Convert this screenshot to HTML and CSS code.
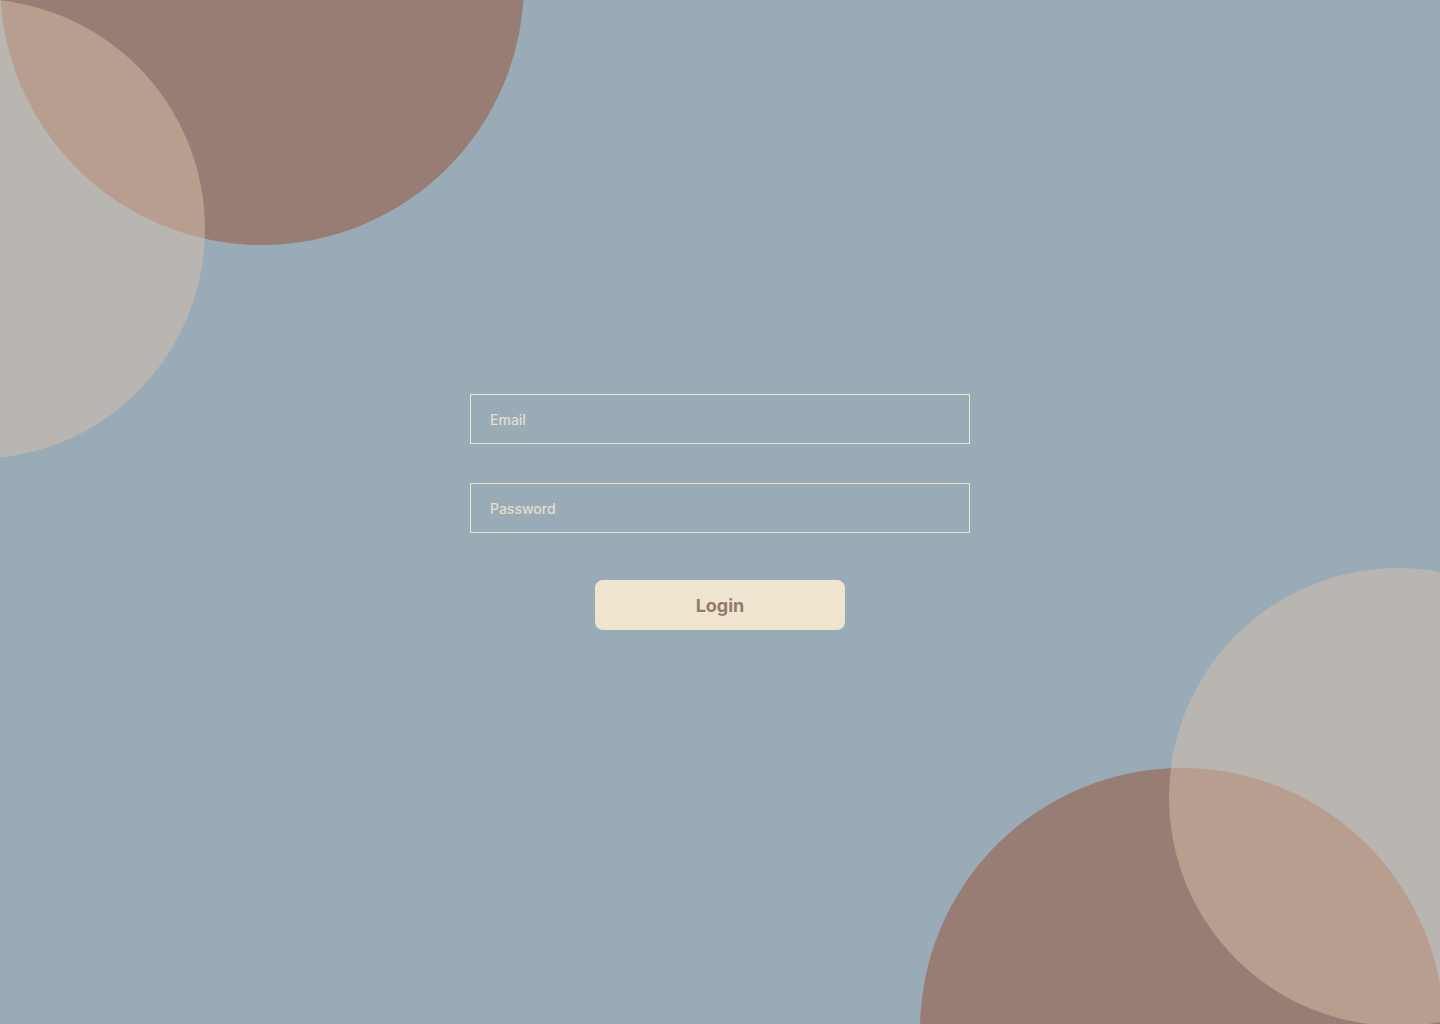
FILE: index.html
```html
<!DOCTYPE html>
<html lang="en">
<head>
<meta charset="utf-8">
<title>Login</title>
<link rel="stylesheet" href="styles.css">
</head>
<body>
<div class="page">
  <div class="blob blob-brown blob-tl"></div>
  <div class="blob blob-light blob-tl2"></div>
  <div class="blob blob-brown blob-br"></div>
  <div class="blob blob-light blob-br2"></div>
  <form class="login">
    <input class="field" type="email" placeholder="Email">
    <input class="field" type="password" placeholder="Password">
    <button class="btn" type="button">Login</button>
  </form>
</div>
</body>
</html>
```
FILE: styles.css
```css
* { box-sizing: border-box; }
html, body { margin: 0; padding: 0; }
body {
  background: #9aabb8;
  font-family: Inter, "Noto Sans", sans-serif;
}
.page {
  position: relative;
  width: 100%;
  height: 1024px;
  overflow: hidden;
  display: flex;
  align-items: center;
  justify-content: center;
}
.blob {
  position: absolute;
  border-radius: 50%;
}
.blob-brown { background: #987d74; }
.blob-light { background: #d8bfaa; opacity: 0.5; }
.blob-tl { width: 524px; height: 524px; left: 0; top: -279px; }
.blob-tl2 { width: 460px; height: 460px; left: -255px; top: -1px; }
.blob-br { width: 524px; height: 524px; left: 920px; top: 768px; }
.blob-br2 { width: 458px; height: 458px; left: 1169px; top: 568px; }
.login {
  position: relative;
  z-index: 1;
  width: 500px;
  display: flex;
  flex-direction: column;
  align-items: center;
}
.field {
  width: 500px;
  height: 50px;
  border: 1px solid #efe4cd;
  background: transparent;
  padding: 0 19px;
  font-family: Inter, "Noto Sans", sans-serif;
  font-size: 14px;
  font-weight: 500;
  color: #efe4cd;
  outline: none;
  border-radius: 0;
}
.field::placeholder { color: #e6ddcb; opacity: 1; }
.field + .field { margin-top: 39px; }
.btn {
  margin-top: 47px;
  width: 250px;
  height: 50px;
  border: none;
  border-radius: 8px;
  background: #efe4cd;
  color: #907a70;
  font-family: Inter, "Noto Sans", sans-serif;
  font-size: 18px;
  font-weight: 700;
  cursor: pointer;
}
```
